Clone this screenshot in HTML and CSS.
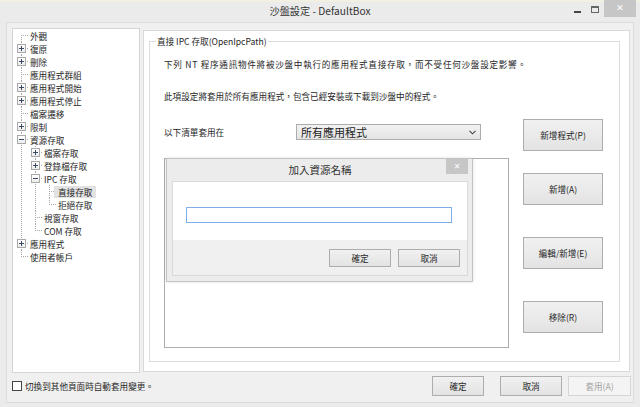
FILE: index.html
```html
<!DOCTYPE html>
<html>
<head>
<meta charset="utf-8">
<link rel="stylesheet" href="styles.css">
</head>
<body>
<div class="window">
  <div class="titlebar">
    <div></div>
    <div class="title">沙盤設定 - DefaultBox</div>
    <div class="controls">
      <span class="ctl-min"></span>
      <span class="ctl-max"></span>
      <span class="ctl-close">✕</span>
    </div>
  </div>
  <div class="client">
    <div class="main">
      <div class="tree">
        <ul class="root">
          <li class="first"><div class="row"><span class="nb"></span><span class="lbl">外觀</span></div></li>
          <li><div class="row"><span class="bx plus"></span><span class="lbl">復原</span></div></li>
          <li><div class="row"><span class="bx plus"></span><span class="lbl">刪除</span></div></li>
          <li><div class="row"><span class="nb"></span><span class="lbl">應用程式群組</span></div></li>
          <li><div class="row"><span class="bx plus"></span><span class="lbl">應用程式開始</span></div></li>
          <li><div class="row"><span class="bx plus"></span><span class="lbl">應用程式停止</span></div></li>
          <li><div class="row"><span class="nb"></span><span class="lbl">檔案遷移</span></div></li>
          <li><div class="row"><span class="bx plus"></span><span class="lbl">限制</span></div></li>
          <li class="open"><div class="row"><span class="bx minus"></span><span class="lbl">資源存取</span></div>
            <ul>
              <li><div class="row"><span class="bx plus"></span><span class="lbl">檔案存取</span></div></li>
              <li><div class="row"><span class="bx plus"></span><span class="lbl">登錄檔存取</span></div></li>
              <li class="open"><div class="row"><span class="bx minus"></span><span class="lbl">IPC 存取</span></div>
                <ul>
                  <li><div class="row"><span class="nb"></span><span class="lbl sel">直接存取</span></div></li>
                  <li class="last"><div class="row"><span class="nb"></span><span class="lbl">拒絕存取</span></div></li>
                </ul>
              </li>
              <li><div class="row"><span class="nb"></span><span class="lbl">視窗存取</span></div></li>
              <li class="last"><div class="row"><span class="nb"></span><span class="lbl">COM 存取</span></div></li>
            </ul>
          </li>
          <li><div class="row"><span class="bx plus"></span><span class="lbl">應用程式</span></div></li>
          <li class="last"><div class="row"><span class="nb"></span><span class="lbl">使用者帳戶</span></div></li>
        </ul>
      </div>
      <div class="page">
        <div class="group">
          <div class="legend">直接 IPC 存取(OpenIpcPath)</div>
          <div class="group-body">
            <div class="leftcol">
              <p class="desc1">下列 NT 程序通訊物件將被沙盤中執行的應用程式直接存取，而不受任何沙盤設定影響。</p>
              <p class="desc2">此項設定將套用於所有應用程式，包含已經安裝或下載到沙盤中的程式。</p>
              <div class="applyrow">
                <span class="applylbl">以下清單套用在</span>
                <div class="combo">
                  <span>所有應用程式</span>
                  <svg class="chev" width="7" height="5" viewBox="0 0 7 5"><path d="M0.5 0.8 L3.5 3.8 L6.5 0.8" fill="none" stroke="#444" stroke-width="1.1"/></svg>
                </div>
              </div>
              <div class="listbox"></div>
            </div>
            <div class="btncol">
              <button class="btn b1">新增程式(P)</button>
              <button class="btn b2">新增(A)</button>
              <button class="btn b3">編輯/新增(E)</button>
              <button class="btn b3">移除(R)</button>
            </div>
          </div>
        </div>
      </div>
    </div>
    <div class="bottom">
      <span class="check"></span>
      <span class="checklbl">切換到其他頁面時自動套用變更。</span>
      <button class="btn bb ok">確定</button>
      <button class="btn bb cancel">取消</button>
      <button class="btn bb apply" disabled>套用(A)</button>
    </div>
  </div>

  <div class="dialog">
    <div class="dlg-title">
      <span class="dlg-caption">加入資源名稱</span>
      <span class="dlg-close">✕</span>
    </div>
    <div class="dlg-inner">
      <div class="dlg-white">
        <div class="dlg-input"></div>
      </div>
      <div class="dlg-btns">
        <button class="btn db">確定</button>
        <button class="btn db">取消</button>
      </div>
    </div>
  </div>
</div>
</body>
</html>
```

FILE: styles.css
```css
* { box-sizing: border-box; }
html, body {
  margin: 0;
  padding: 0;
}
body {
  width: 640px;
  height: 407px;
  overflow: hidden;
  background: #ebebeb;
  font-family: "Noto Sans CJK TC", "Noto Sans", sans-serif;
  font-size: 8.6px;
  color: #262626;
}
.window {
  position: relative;
  width: 640px;
  height: 407px;
  background: #ebebeb;
  border-top: 2px solid #f2f0e2;
}

/* title bar */
.titlebar {
  height: 20px;
  display: grid;
  grid-template-columns: 1fr auto 1fr;
  align-items: start;
}
.title {
  font-size: 10.2px;
  line-height: 18px;
  color: #333;
}
.controls {
  justify-self: end;
  display: flex;
  align-items: flex-start;
  margin-top: -2px;
}
.ctl-min {
  width: 7px;
  height: 2px;
  background: #444;
  margin-top: 11px;
  margin-right: 10px;
}
.ctl-max {
  width: 8px;
  height: 7px;
  border: 1px solid #666;
  border-top-width: 2px;
  margin-top: 6px;
  margin-right: 5px;
}
.ctl-close {
  width: 32px;
  height: 17px;
  background: #c6c6c6;
  color: #fff;
  font-size: 9px;
  line-height: 17px;
  text-align: center;
  margin-right: 4px;
  font-family: "DejaVu Sans", sans-serif;
}

/* client */
.client {
  margin-left: 6px;
  width: 628px;
  height: 381px;
  background: #f0f0f0;
  border: 1px solid #dcdcdc;
  padding: 5px 3px 0 5px;
}
.main {
  display: flex;
  gap: 3px;
  height: 345px;
}

/* tree */
.tree {
  width: 128px;
  height: 345px;
  background: #fff;
  border: 1px solid #d5d5d5;
}
.tree ul {
  list-style: none;
  margin: 0;
  padding: 0;
}
.tree ul ul {
  margin-left: 14px;
}
.tree li {
  background:
    repeating-linear-gradient(to right, #a8a8a8 0 1px, transparent 1px 2px) 8px 6px / 8px 1px no-repeat,
    repeating-linear-gradient(to bottom, #a8a8a8 0 1px, transparent 1px 2px) 8px 0 / 1px 100% no-repeat;
}
.tree li.first {
  background:
    repeating-linear-gradient(to right, #a8a8a8 0 1px, transparent 1px 2px) 8px 6px / 8px 1px no-repeat,
    repeating-linear-gradient(to bottom, #a8a8a8 0 1px, transparent 1px 2px) 8px 6px / 1px 100% no-repeat;
}
.tree li.last {
  background:
    repeating-linear-gradient(to right, #a8a8a8 0 1px, transparent 1px 2px) 8px 6px / 8px 1px no-repeat,
    repeating-linear-gradient(to bottom, #a8a8a8 0 1px, transparent 1px 2px) 8px 0 / 1px 7px no-repeat;
}
.row {
  display: flex;
  align-items: center;
  height: 13px;
}
.nb, .bx {
  width: 9px;
  height: 9px;
  margin-left: 4px;
  flex: none;
}
.bx {
  border: 1px solid #a9a9a9;
  background-color: #fff;
}
.bx.plus {
  background:
    linear-gradient(#3d4a66, #3d4a66) center / 5px 1px no-repeat,
    linear-gradient(#3d4a66, #3d4a66) center / 1px 5px no-repeat,
    linear-gradient(#ffffff, #ececec);
}
.bx.minus {
  background:
    linear-gradient(#3d4a66, #3d4a66) center / 5px 1px no-repeat,
    linear-gradient(#ffffff, #ececec);
}
.lbl {
  padding: 0 4px;
  line-height: 12px;
  height: 12px;
  white-space: nowrap;
}
.lbl.sel {
  background: #e2e2e2;
}

/* page */
.page {
  width: 487px;
  height: 342px;
  margin-top: 2px;
  background: #fff;
  border: 1px solid #d9d9d9;
  padding: 10px 9px 9px 5px;
}
.group {
  height: 321px;
  border: 1px solid #dcdcdc;
  padding: 0 16px 0 14px;
}
.legend {
  width: fit-content;
  margin-top: -7px;
  margin-left: -8px;
  padding: 0 1px;
  background: #fff;
  line-height: 13px;
  height: 13px;
  white-space: nowrap;
}
.group-body {
  display: grid;
  grid-template-columns: 345px 80px;
  column-gap: 14px;
  align-items: start;
}
.leftcol p {
  margin: 0;
  line-height: 13px;
  white-space: nowrap;
}
.desc1 {
  margin-top: 10px !important;
  letter-spacing: 0.72px;
}
.desc2 { margin-top: 18.5px !important; }
.applyrow {
  display: flex;
  align-items: center;
  margin-top: 21.5px;
  height: 16px;
}
.applylbl {
  width: 132px;
  flex: none;
}
.combo {
  width: 185px;
  height: 16px;
  border: 1px solid #acacac;
  background: linear-gradient(#f2f2f2, #e4e4e4);
  display: flex;
  align-items: center;
  justify-content: space-between;
  padding: 0 4px 0 4px;
  font-size: 11px;
  line-height: 14px;
  color: #222;
}
.chev { margin-top: 1px; }
.listbox {
  margin-top: 18px;
  height: 190px;
  background: #fff;
  border: 1px solid #adadad;
}
.btncol {
  display: flex;
  flex-direction: column;
}
.btn {
  font-family: inherit;
  font-size: 8.6px;
  color: #262626;
  background: linear-gradient(#f1f1f1, #e3e3e3);
  border: 1px solid #adadad;
  border-radius: 0;
  padding: 0;
  margin: 0;
}
.btncol .btn {
  width: 80px;
  height: 32px;
}
.b1 { margin-top: 71px; }
.b2 { margin-top: 22px; }
.b3 { margin-top: 32px; }

/* bottom */
.bottom {
  display: flex;
  align-items: center;
  margin-top: 3px;
  height: 20px;
}
.check {
  width: 10px;
  height: 10px;
  border: 1px solid #444;
  background: #fff;
}
.checklbl {
  margin-left: 3px;
  white-space: nowrap;
}
.bb { height: 20px; }
.ok { width: 52px; margin-left: auto; }
.cancel { width: 62px; margin-left: 16px; }
.apply {
  width: 63px;
  margin-left: 6px;
  margin-right: -1px;
  background: #f4f4f4;
  border-color: #d5d5d5;
  color: #a3a3a3;
}

/* dialog */
.dialog {
  position: absolute;
  left: 166px;
  top: 156px;
  width: 307px;
  height: 124px;
  background: #ececec;
  border: 1px solid #c3c3c3;
  padding: 0 4px 5px 5px;
  display: flex;
  flex-direction: column;
  box-shadow: 0 0 3px rgba(0,0,0,0.12);
}
.dlg-title {
  height: 22px;
  display: grid;
  grid-template-columns: 1fr auto;
}
.dlg-caption {
  font-size: 10.5px;
  line-height: 22px;
  text-align: center;
  padding-left: 22px;
  color: #333;
}
.dlg-close {
  width: 22px;
  height: 15px;
  background: #c6c6c6;
  color: #fff;
  font-size: 8px;
  line-height: 15px;
  text-align: center;
  font-family: "DejaVu Sans", sans-serif;
}
.dlg-inner {
  flex: 1;
  display: flex;
  flex-direction: column;
  border: 1px solid #dadada;
}
.dlg-white {
  height: 58px;
  background: #fff;
  padding: 25px 15px 0 13px;
}
.dlg-input {
  height: 16px;
  border: 1px solid #7eaee6;
  background: #fff;
}
.dlg-btns {
  flex: 1;
  background: #f0f0f0;
  display: flex;
  justify-content: flex-end;
  align-items: flex-start;
  gap: 7px;
  padding: 9px 7px 0 0;
}
.db {
  width: 62px;
  height: 18px;
}
```
